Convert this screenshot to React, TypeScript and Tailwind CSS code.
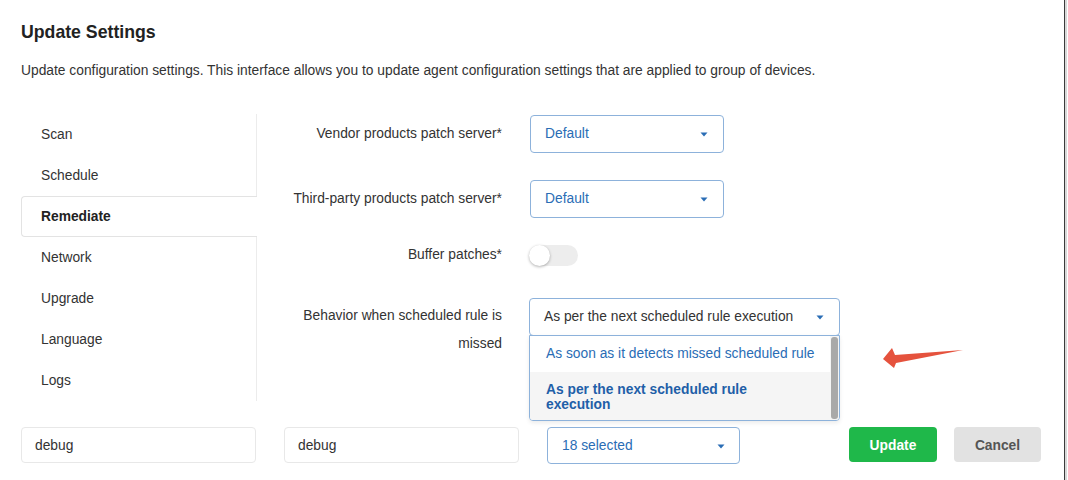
import React from "react";

const font = { fontFamily: '"Liberation Sans", Arial, Helvetica, sans-serif' };

function Caret({ className = "" }: { className?: string }) {
  return (
    <svg width="8" height="5" viewBox="0 0 8 5" className={className}>
      <path d="M0.5 0.5 L7.5 0.5 L4 4.5 Z" fill="#2a6db5" />
    </svg>
  );
}

function Select({ value, width }: { value: string; width: string }) {
  return (
    <div
      className={`${width} h-[38px] flex items-center justify-between pl-[14px] pr-[15px] border border-[#8db2db] rounded-[4px] text-[13.8px] text-[#2a6db5] bg-white`}
    >
      <span>{value}</span>
      <Caret />
    </div>
  );
}

const navItems = ["Scan", "Schedule", "Remediate", "Network", "Upgrade", "Language", "Logs"];

export default function App() {
  return (
    <div className="w-[1068px] h-[480px] flex bg-white overflow-hidden" style={font}>
      <div className="relative w-[1065px] h-full border-r border-[#3a3a3a] pl-[21px] pt-[20px] text-[#333]">
        <h1 className="text-[17.7px] leading-[24px] font-bold text-[#222]">Update Settings</h1>
        <p className="mt-[18px] text-[13.8px] leading-[18px] text-[#333]">
          Update configuration settings. This interface allows you to update agent configuration settings that are applied to group of devices.
        </p>

        <div className="mt-[34px] flex">
          {/* Nav */}
          <div className="w-[236px] flex flex-col">
            {navItems.map((n) =>
              n === "Remediate" ? (
                <div
                  key={n}
                  className="h-[41px] flex items-center pl-[19px] pt-[2px] border border-r-0 border-[#e3e3e3] rounded-l-[4px] text-[13.8px] font-bold text-[#222]"
                >
                  {n}
                </div>
              ) : (
                <div
                  key={n}
                  className="h-[41px] flex items-center pl-[20px] pt-[2px] border-r border-[#ececec] text-[13.8px] text-[#333]"
                >
                  {n}
                </div>
              )
            )}
          </div>

          {/* Form */}
          <div className="flex flex-col pt-[1px]">
            <div className="flex items-center h-[38px]">
              <div className="w-[245px] text-right text-[13.8px] text-[#333]">Vendor products patch server*</div>
              <div className="ml-[28px]">
                <Select value="Default" width="w-[194px]" />
              </div>
            </div>
            <div className="flex items-center h-[38px] mt-[27px]">
              <div className="w-[245px] text-right text-[13.8px] text-[#333]">Third-party products patch server*</div>
              <div className="ml-[28px]">
                <Select value="Default" width="w-[194px]" />
              </div>
            </div>
            <div className="flex items-center h-[21px] mt-[27px]">
              <div className="w-[245px] text-right text-[13.8px] text-[#333]">Buffer patches*</div>
              <div className="ml-[27px] relative w-[49px] h-[21px] rounded-full bg-[#ededed]">
                <div className="absolute left-0 top-0 w-[21px] h-[21px] rounded-full bg-white shadow-[0_1px_3px_rgba(0,0,0,0.3)]" />
              </div>
            </div>
            <div className="flex items-start mt-[32px]">
              <div className="w-[245px] text-right text-[13.8px] leading-[28px] pt-[4px] text-[#333]">
                Behavior when scheduled rule is
                <br />
                missed
              </div>
              <div className="ml-[27px] relative w-[311px]">
                <div className="h-[38px] flex items-center justify-between pl-[14px] pr-[15px] border border-[#8db2db] rounded-[4px] text-[13.8px] text-[#333] bg-white">
                  <span>As per the next scheduled rule execution</span>
                  <Caret />
                </div>
                <div className="absolute left-0 top-[37px] w-[311px] h-[86px] border border-[#8db2db] rounded-b-[4px] bg-white flex shadow-[0_2px_4px_rgba(0,0,0,0.08)] overflow-hidden">
                  <div className="flex-1 flex flex-col">
                    <div className="h-[36px] flex items-center pl-[16px] text-[13.8px] text-[#2a6db5]">
                      As soon as it detects missed scheduled rule
                    </div>
                    <div className="flex-1 bg-[#f5f5f5] pl-[16px] pt-[10px] text-[13.8px] leading-[15px] font-bold text-[#1f5fa8]">
                      As per the next scheduled rule
                      <br />
                      execution
                    </div>
                  </div>
                  <div className="w-[9px] bg-[#f5f5f5] flex justify-center pt-[1px] pb-[1px]">
                    <div className="w-[7px] h-full rounded-[3px] bg-[#a9a9a9]" />
                  </div>
                </div>
              </div>
            </div>
          </div>
        </div>

        {/* Bottom row */}
        <div className="mt-[26px] flex items-start">
          <div className="w-[235px] h-[36px] flex items-center pl-[13px] pt-[2px] border border-[#e8e8e8] rounded-[4px] text-[13.8px] text-[#333]">
            debug
          </div>
          <div className="ml-[28px] w-[235px] h-[36px] flex items-center pl-[13px] pt-[2px] border border-[#e8e8e8] rounded-[4px] text-[13.8px] text-[#333]">
            debug
          </div>
          <div className="ml-[28px] w-[193px] h-[37px] flex items-center justify-between pl-[14px] pr-[14px] pt-[1px] border border-[#8db2db] rounded-[4px] text-[13.8px] text-[#2a6db5]">
            <span>18 selected</span>
            <Caret />
          </div>
          <button className="ml-[109px] w-[88px] h-[35px] pt-[3px] rounded-[4px] bg-[#1fb84a] text-white text-[13.8px] font-bold">
            Update
          </button>
          <button className="ml-[17px] w-[87px] h-[35px] pt-[3px] rounded-[4px] bg-[#e2e2e2] text-[#555] text-[13.8px] font-bold">
            Cancel
          </button>
        </div>

        {/* Red annotation arrow */}
        <svg className="absolute left-[878px] top-[342px]" width="90" height="32" viewBox="878 342 90 32">
          <polygon
            points="883,359 892,348 895,355 963,350 896,363 894,368"
            fill="#e5523d"
          />
        </svg>
      </div>
      <div className="w-[2px] h-full bg-[#d8d8d8]" />
    </div>
  );
}
